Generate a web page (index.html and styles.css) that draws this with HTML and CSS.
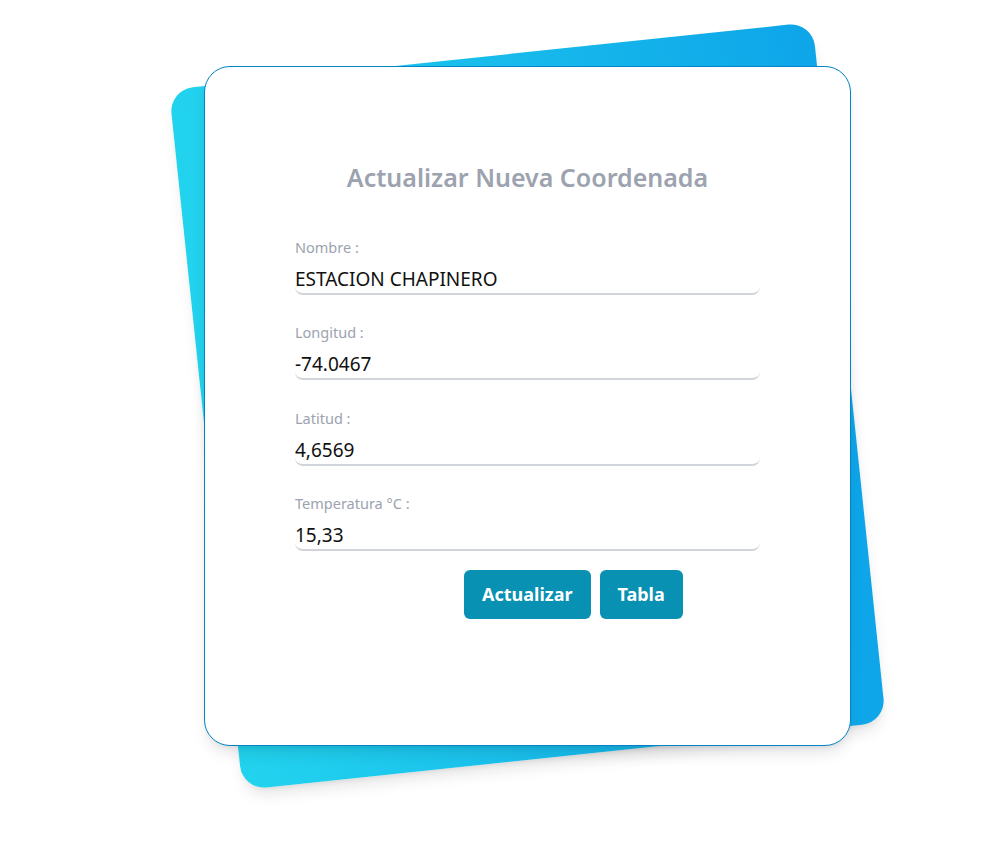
FILE: index.html
```html
<!DOCTYPE html>
<html lang="es">
<head>
<meta charset="utf-8">
<title>Actualizar Nueva Coordenada</title>
<link rel="stylesheet" href="styles.css">
</head>
<body>
<div class="page">
  <div class="stack">
    <div class="back-card"></div>
    <div class="card">
      <h1 class="title">Actualizar Nueva Coordenada</h1>
      <form class="form">
        <div class="field">
          <label class="label">Nombre :</label>
          <input class="input" type="text" value="ESTACION CHAPINERO">
        </div>
        <div class="field">
          <label class="label">Longitud :</label>
          <input class="input" type="text" value="-74.0467">
        </div>
        <div class="field">
          <label class="label">Latitud :</label>
          <input class="input" type="text" value="4,6569">
        </div>
        <div class="field">
          <label class="label">Temperatura °C :</label>
          <input class="input" type="text" value="15,33">
        </div>
        <div class="actions">
          <button type="button" class="btn">Actualizar</button>
          <button type="button" class="btn">Tabla</button>
        </div>
      </form>
    </div>
  </div>
</div>
</body>
</html>
```

FILE: styles.css
```css
* { box-sizing: border-box; }
html, body { margin: 0; padding: 0; background: #ffffff; }
body { font-family: "Segoe UI", "Noto Sans", "Open Sans", sans-serif; }

.page {
  min-height: 100vh;
  padding: 54px 0 0 204px;
}
.stack {
  position: relative;
  width: 647px;
  padding: 12px 0;
}
.back-card {
  position: absolute;
  inset: 0;
  border-radius: 24px;
  background: linear-gradient(to right, #22d3ee, #0ea5e9);
  transform: rotate(-6deg);
  box-shadow: 0 10px 15px -3px rgba(0,0,0,0.1), 0 4px 6px -4px rgba(0,0,0,0.1);
}
.card {
  position: relative;
  width: 647px;
  height: 680px;
  background: #ffffff;
  border: 1px solid #0284c7;
  border-radius: 26px;
  box-shadow: 0 10px 15px -3px rgba(0,0,0,0.1), 0 4px 6px -4px rgba(0,0,0,0.1);
  padding: 92px 90px 0 90px;
}
.title {
  margin: 0;
  text-align: center;
  font-size: 25px;
  line-height: 36px;
  font-weight: 600;
  color: #9ca3af;
}
.form {
  margin-top: 42px;
  display: flex;
  flex-direction: column;
}
.field {
  display: flex;
  flex-direction: column;
}
.field + .field {
  margin-top: 27.3px;
}
.label {
  font-size: 14.5px;
  line-height: 20px;
  color: #9ca3af;
}
.input {
  margin-top: 8px;
  height: 30px;
  border: none;
  border-bottom: 2px solid #d1d5db;
  border-radius: 8px;
  padding: 0;
  font-family: inherit;
  font-size: 19px;
  line-height: 26px;
  color: #111111;
  background: transparent;
  outline: none;
}
.actions {
  display: flex;
  gap: 9px;
  margin-left: 169px;
  margin-top: 19px;
}
.btn {
  height: 49px;
  padding: 0 18px;
  border: none;
  border-radius: 6px;
  background: #0891b2;
  color: #ffffff;
  font-family: inherit;
  font-size: 18px;
  font-weight: 700;
}
```
